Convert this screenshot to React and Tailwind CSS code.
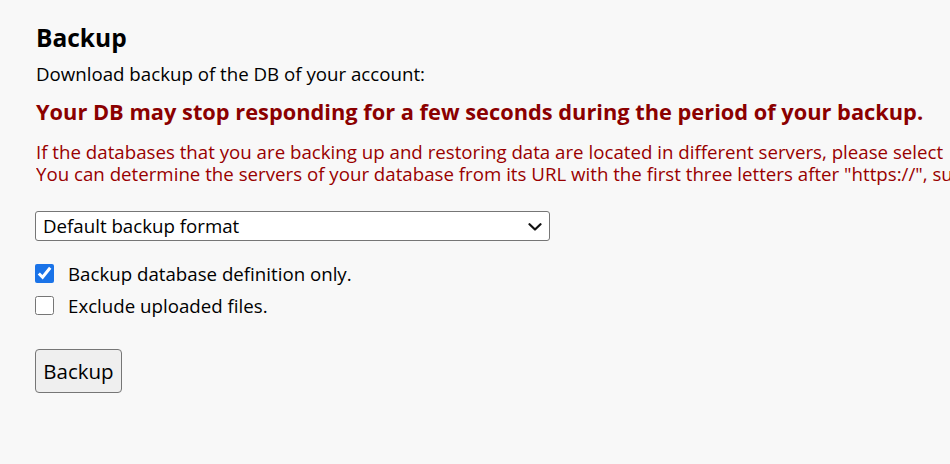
import { useState } from "react";

export default function App() {
  const [defOnly, setDefOnly] = useState(true);
  const [excludeFiles, setExcludeFiles] = useState(false);

  return (
    <div className="min-h-[464px] w-full bg-[#f8f8f8] overflow-hidden font-['Open_Sans',sans-serif] text-black">
      <div className="pl-[36px] pt-[22px]">
        <h2 className="text-[24.5px] font-bold leading-[32px]">Backup</h2>
        <p className="mt-[8px] text-[18.7px] leading-[24px]">
          Download backup of the DB of your account:
        </p>
        <p className="mt-[12px] text-[21.8px] font-bold leading-[28px] text-[#8b0000] whitespace-nowrap">
          Your DB may stop responding for a few seconds during the period of your backup.
        </p>
        <div className="mt-[14px] text-[18.7px] leading-[22px] text-[#900] whitespace-nowrap overflow-hidden">
          <p className="py-px">
            If the databases that you are backing up and restoring data are located in different servers, please select
          </p>
          <p className="-mt-[2px] py-px">
            You can determine the servers of your database from its URL with the first three letters after "https://", su
          </p>
        </div>

        <div className="relative mt-[25px] -ml-px w-[515px]">
          <select className="appearance-none w-full h-[30px] bg-white border border-[#767676] rounded-[3px] pl-[7px] text-[18.7px] leading-[28px] outline-none">
            <option>Default backup format</option>
            <option>Compatible backup format</option>
          </select>
          <svg
            className="pointer-events-none absolute right-[8px] top-[12px]"
            width="14"
            height="8"
            viewBox="0 0 14 8"
            fill="none"
          >
            <path d="M1.5 1.2 L7 6.5 L12.5 1.2" stroke="#111" strokeWidth="2.2" strokeLinecap="round" strokeLinejoin="round" />
          </svg>
        </div>

        <div className="mt-[23px] flex flex-col gap-[13px]">
          <label className="flex items-center gap-[14px] text-[18.7px] leading-[19px]">
            <input
              type="checkbox"
              checked={defOnly}
              onChange={(e) => setDefOnly(e.target.checked)}
              className="w-[19px] h-[19px] m-0 -ml-px accent-[#1a73e8]"
            />
            Backup database definition only.
          </label>
          <label className="flex items-center gap-[14px] text-[18.7px] leading-[19px]">
            <input
              type="checkbox"
              checked={excludeFiles}
              onChange={(e) => setExcludeFiles(e.target.checked)}
              className="w-[19px] h-[19px] m-0 -ml-px accent-[#1a73e8]"
            />
            Exclude uploaded files.
          </label>
        </div>

        <button className="mt-[34px] -ml-px h-[44px] w-[87px] bg-[#efefef] border border-[#767676] rounded-[4px] text-[20.5px]">
          Backup
        </button>
      </div>
    </div>
  );
}
